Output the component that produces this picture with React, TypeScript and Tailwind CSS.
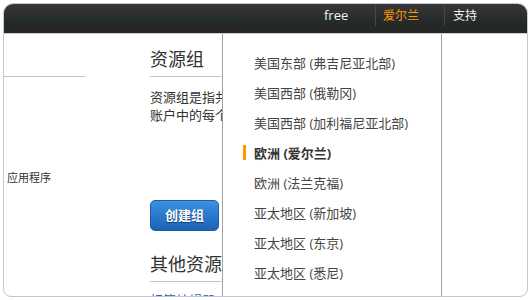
const regions = [
  "美国东部 (弗吉尼亚北部)",
  "美国西部 (俄勒冈)",
  "美国西部 (加利福尼亚北部)",
  "欧洲 (爱尔兰)",
  "欧洲 (法兰克福)",
  "亚太地区 (新加坡)",
  "亚太地区 (东京)",
  "亚太地区 (悉尼)",
];

const selected = "欧洲 (爱尔兰)";

const font = "font-['Open_Sans','Noto_Sans_CJK_SC',sans-serif]";

const App = () => {
  return (
    <div className={`min-h-[300px] bg-white pt-[3px] pl-[3px] ${font}`}>
      <div className="relative w-[525px] h-[294px] overflow-hidden rounded-t-[10px] rounded-b-[8px] border border-[#c6c6d0] bg-white">
        {/* top bar */}
        <div className="h-[30px] border-b border-[#cfcfcf] bg-[linear-gradient(to_bottom,#373737_0%,#2e2e2e_38%,#253131_44%,#272b2b_52%,#252525_100%)]">
          <div className="flex h-[22px] items-stretch justify-end pt-[1px] text-[13px] leading-none">
            <div className="flex w-[51px] items-center text-[#f2f2f2]">free</div>
            <div className="flex w-[69px] items-center border-l border-[#474747] pl-[7px] text-[12px] text-[#ff9900]">
              爱尔兰
            </div>
            <div className="flex w-[83px] items-center border-l border-[#474747] pl-[8px] text-[12px] text-[#f2f2f2]">
              支持
            </div>
          </div>
        </div>

        {/* page body */}
        <div className="flex">
          <div className="w-[82px] shrink-0">
            <div className="h-[43px] border-b border-[#c4c4c4]" />
            <div className="mt-[94px] pl-[3px] text-[11px] leading-[14px] text-[#333]">应用程序</div>
          </div>

          <div className="ml-[64px] w-[270px] shrink-0 text-[#333]">
            <div className="border-b border-[#c4c4c4] pt-[13px] pb-[5px] text-[18px] leading-[24px]">资源组</div>
            <p className="mt-[11px] whitespace-nowrap text-[13px] leading-[18px]">
              资源组是指共享相同标签的资源集合，
              <br />
              账户中的每个资源都可以加入资源组。
            </p>
            <button className="mt-[76px] h-[31px] rounded-[5px] border border-[#1b5cab] bg-[linear-gradient(to_bottom,#3a91e4,#1c62b6)] px-[14px] text-[13px] font-bold text-white [text-shadow:0_1px_1px_rgba(0,0,0,0.45)]">
              创建组
            </button>
            <div className="mt-[21px] border-b border-[#c4c4c4] pb-[5px] text-[18px] leading-[24px]">其他资源</div>
            <div className="mt-[9px] text-[13px] leading-[18px] text-[#1a66c2]">标签编辑器</div>
          </div>
        </div>

        {/* region dropdown */}
        <div className="absolute top-[30px] left-[218px] h-[280px] w-[220px] border-x border-[#a0a0a0] bg-white pt-[14px]">
          {regions.map((r) => {
            const active = r === selected;
            return (
              <div key={r} className="relative flex h-[30px] items-center pl-[31px]">
                {active && <span className="absolute left-[20px] top-[7px] h-[15px] w-[3px] bg-[#ff9900]" />}
                <span className={`text-[13px] leading-none ${active ? "font-bold text-[#333]" : "text-[#444]"}`}>{r}</span>
              </div>
            );
          })}
        </div>
      </div>
    </div>
  );
};

export default App;
